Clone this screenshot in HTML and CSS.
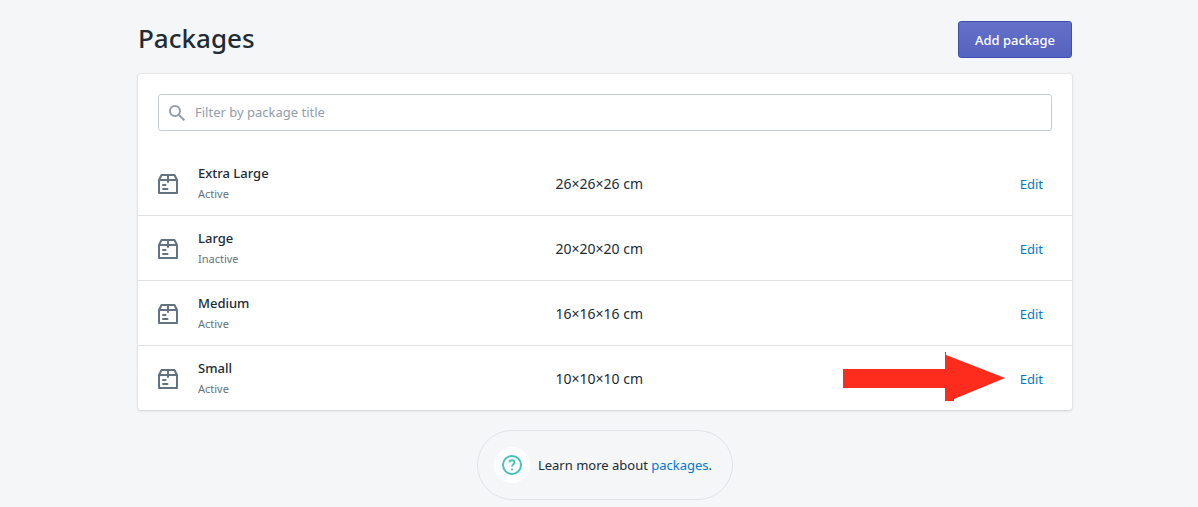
FILE: index.html
```html
<!DOCTYPE html>
<html lang="en">
<head>
<meta charset="utf-8">
<meta name="viewport" content="width=device-width, initial-scale=1">
<title>Packages</title>
<link rel="stylesheet" href="styles.css">
</head>
<body>
<svg class="symbols" aria-hidden="true">
  <symbol id="package" viewBox="0 0 20 20">
    <path d="M1 6 3.500 1h13L19 6v13H1zM1 6h18" fill="none" stroke="currentColor" stroke-width="2" stroke-linejoin="round"/>
    <path d="M10 1v7M5 11h2.500M5 15h4.500" fill="none" stroke="currentColor" stroke-width="2" stroke-linecap="round"/>
  </symbol>
</svg>
<main class="page">
  <header class="header">
    <h1 class="title">Packages</h1>
    <button class="primary" type="button">Add package</button>
  </header>
  <section class="card">
    <label class="filter">
      <svg class="filter-icon" viewBox="0 0 16 16" aria-hidden="true"><circle cx="6" cy="6" r="5" fill="none" stroke="currentColor" stroke-width="2"/><path d="m9.700 9.700 5.600 5.600" stroke="currentColor" stroke-width="2"/></svg>
      <input class="filter-input" type="text" placeholder="Filter by package title" aria-label="Filter by package title">
    </label>
    <ul class="list">
      <li class="row">
        <svg class="package-icon" aria-hidden="true"><use href="#package"/></svg>
        <div><h2 class="name">Extra Large</h2><p class="status">Active</p></div>
        <span class="size">26×26×26 cm</span>
        <a class="link" href="#">Edit</a>
      </li>
      <li class="row">
        <svg class="package-icon" aria-hidden="true"><use href="#package"/></svg>
        <div><h2 class="name">Large</h2><p class="status">Inactive</p></div>
        <span class="size">20×20×20 cm</span>
        <a class="link" href="#">Edit</a>
      </li>
      <li class="row">
        <svg class="package-icon" aria-hidden="true"><use href="#package"/></svg>
        <div><h2 class="name">Medium</h2><p class="status">Active</p></div>
        <span class="size">16×16×16 cm</span>
        <a class="link" href="#">Edit</a>
      </li>
      <li class="row">
        <svg class="package-icon" aria-hidden="true"><use href="#package"/></svg>
        <div><h2 class="name">Small</h2><p class="status">Active</p></div>
        <span class="size">10×10×10 cm</span>
        <a class="link" href="#">Edit</a>
        <svg class="arrow" viewBox="0 0 162 50" aria-hidden="true"><path d="M0 17h102V0h1v3l59 23-51 21v2h-9V36H0z" fill="#fe2c1c"/></svg>
      </li>
    </ul>
  </section>
  <footer class="help">
    <span class="help-badge">
      <svg class="help-icon" viewBox="0 0 20 20" aria-hidden="true"><circle cx="10" cy="10" r="9" fill="none" stroke="currentColor" stroke-width="2"/><path d="M7.500 7.500c0-3 5-3 5 0 0 1.800-2.500 1.700-2.500 4" fill="none" stroke="currentColor" stroke-width="2"/><circle cx="10" cy="14.500" r="1.100" fill="currentColor"/></svg>
    </span>
    <p class="help-text">Learn more about <a class="link" href="#">packages</a>.</p>
  </footer>
</main>
</body>
</html>
```
FILE: styles.css
```css
* {
  box-sizing: border-box;
}

body {
  margin: 0;
  background: #f4f6f8;
  color: #212b36;
  font: 13px/20px "Noto Sans", "Open Sans", sans-serif;
}

h1, h2, p, ul {
  margin: 0;
  padding: 0;
}

.symbols {
  position: absolute;
  width: 0;
  height: 0;
}

.page {
  padding: 21px 126px 7px 138px;
}

.header {
  display: flex;
  align-items: flex-start;
  justify-content: space-between;
  margin-bottom: 16px;
}

.title {
  font-size: 26px;
  line-height: 34px;
  font-weight: 500;
}

.primary {
  height: 37px;
  padding: 0 16px;
  border: 1px solid #3f4eae;
  border-radius: 3px;
  background: linear-gradient(#6371c7, #5563c1);
  color: #fff;
  font: inherit;
  font-weight: 500;
}

.card {
  padding-top: 20px;
  border-radius: 3px;
  background: #fff;
  box-shadow: 0 0 0 1px rgba(63, 63, 68, 0.05), 0 1px 3px rgba(63, 63, 68, 0.15);
}

.filter {
  display: flex;
  align-items: center;
  height: 37px;
  margin: 0 20px;
  padding: 0 10px;
  gap: 10px;
  border: 1px solid #c4cdd5;
  border-radius: 3px;
}

.filter-icon {
  width: 16px;
  height: 16px;
  color: #919eab;
}

.filter-input {
  flex: 1;
  min-width: 0;
  padding: 0 0 2px;
  border: 0;
  outline: 0;
  background: none;
  color: inherit;
  font: inherit;
}

.filter-input::placeholder {
  color: #919eab;
  opacity: 1;
}

.list {
  margin-top: 20px;
  list-style: none;
}

.row {
  position: relative;
  display: grid;
  grid-template-columns: 20px 19fr 25fr auto;
  align-items: center;
  column-gap: 20px;
  padding: 12px 29px 11px 20px;
}

.row + .row {
  border-top: 1px solid #dfe3e8;
}

.package-icon {
  width: 20px;
  height: 20px;
  color: #637381;
}

.name {
  font-size: 13px;
  line-height: 20px;
  font-weight: 500;
}

.status {
  color: #637381;
  font-size: 11px;
  line-height: 21px;
}

.size {
  font-size: 14px;
}

.link {
  color: #007ace;
  text-decoration: none;
}

.arrow {
  position: absolute;
  right: 67px;
  top: 6px;
  width: 162px;
  height: 50px;
}

.help {
  display: flex;
  align-items: center;
  gap: 8px;
  width: fit-content;
  margin: 20px auto 0;
  padding: 16px 20px 16px 16px;
  border: 1px solid #dfe3e8;
  border-radius: 35px;
}

.help-badge {
  display: grid;
  place-items: center;
  width: 36px;
  height: 36px;
  border-radius: 50%;
  background: #fff;
}

.help-icon {
  width: 20px;
  height: 20px;
  color: #47c1bf;
}
```
